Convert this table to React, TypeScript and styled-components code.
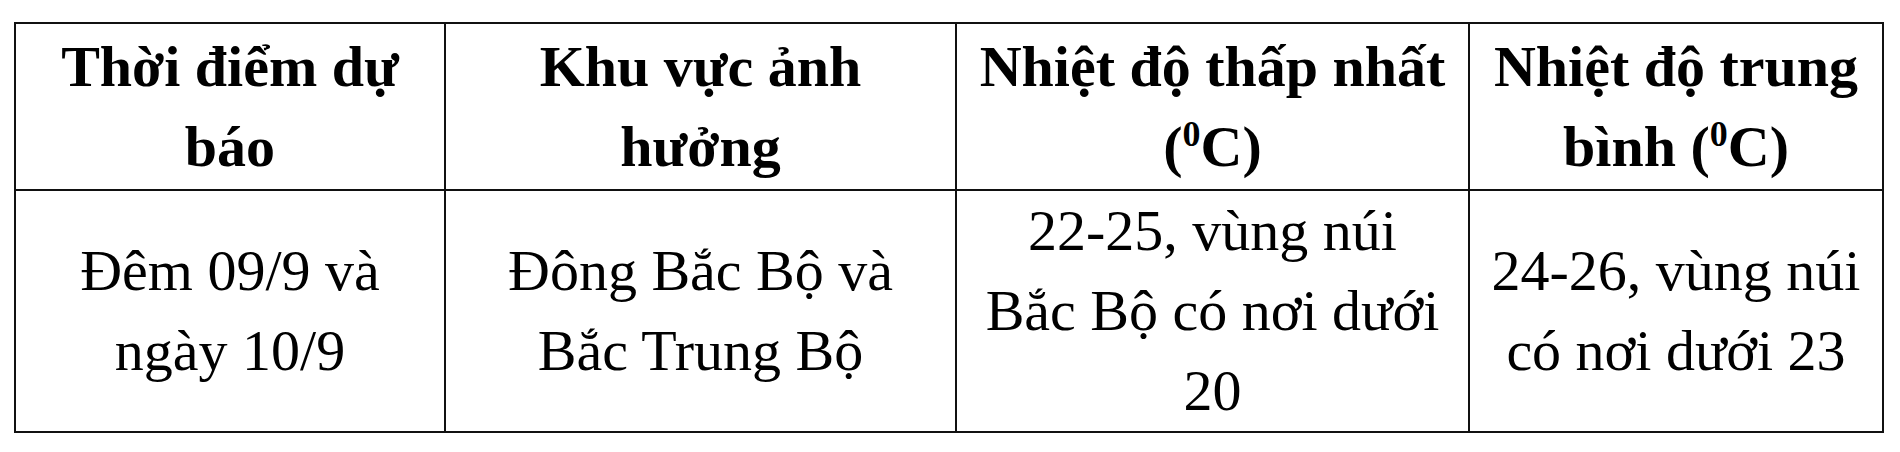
import styled, { createGlobalStyle } from "styled-components"

const GlobalStyle = createGlobalStyle`
html, body {
  margin: 0;
  padding: 0;
  background: #ffffff;
}
`;

const columns = [430, 511, 513, 414]

const headers = [
  { label: "Thời điểm dự báo" },
  { label: "Khu vực ảnh hưởng" },
  { label: "Nhiệt độ thấp nhất", unit: true },
  { label: "Nhiệt độ trung bình", unit: true },
]

const cells = [
  "Đêm 09/9 và ngày 10/9",
  "Đông Bắc Bộ và Bắc Trung Bộ",
  "22-25, vùng núi Bắc Bộ có nơi dưới 20",
  "24-26, vùng núi có nơi dưới 23",
]

const App = () => {
  return (
    <>
      <GlobalStyle />
      <Page>
        <Table>
          <colgroup>
            {columns.map((w, i) => (
              <col key={i} style={{ width: w }} />
            ))}
          </colgroup>
          <thead>
            <HeadRow>
              {headers.map((h, i) => (
                <HeadCell key={i}>
                  {h.label}
                  {h.unit && (
                    <>
                      {" "}(<Sup>0</Sup>C)
                    </>
                  )}
                </HeadCell>
              ))}
            </HeadRow>
          </thead>
          <tbody>
            <BodyRow>
              {cells.map((c, i) => (
                <Cell key={i}>{c}</Cell>
              ))}
            </BodyRow>
          </tbody>
        </Table>
      </Page>
    </>
  )
}

export default App

const Page = styled.div`
width: 1900px;
height: 452px;
padding: 22px 0 0 14px;
box-sizing: border-box;
background: #ffffff;
`;

const Table = styled.table`
border-collapse: collapse;
table-layout: fixed;
width: 1868px;
font-family: "Liberation Serif", "Times New Roman", serif;
font-size: 58px;
line-height: 80px;
color: #000;
`;

const HeadRow = styled.tr`
height: 167px;
`;

const BodyRow = styled.tr`
height: 241px;
`;

const HeadCell = styled.th`
border: 2px solid #111;
padding: 0 21px;
text-align: center;
vertical-align: middle;
font-weight: 700;
`;

const Cell = styled.td`
border: 2px solid #111;
padding: 0 21px;
text-align: center;
vertical-align: middle;
font-weight: 400;
`;

const Sup = styled.sup`
font-size: 0.62em;
line-height: 0;
vertical-align: 0.55em;
`;
